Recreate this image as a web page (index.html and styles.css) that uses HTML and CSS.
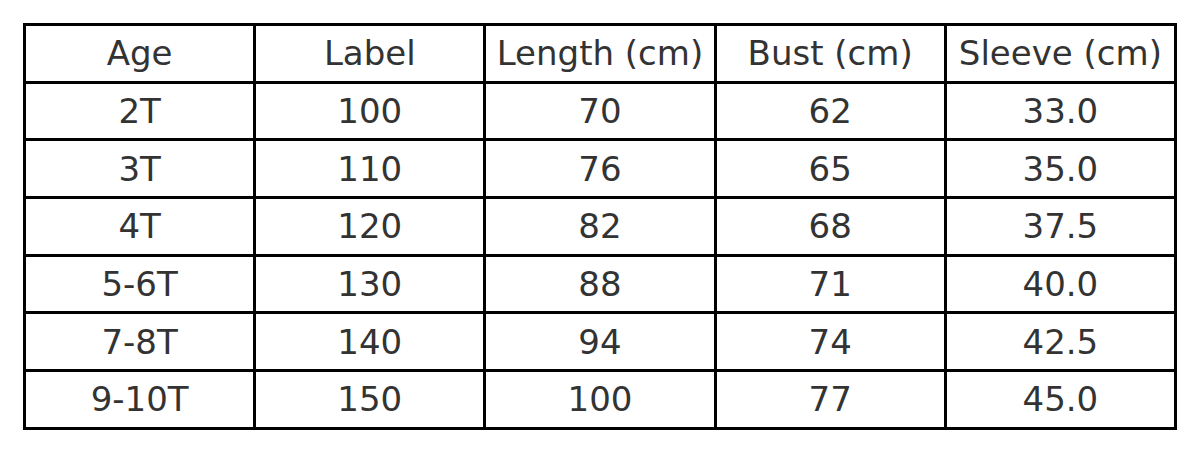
FILE: index.html
```html
<!DOCTYPE html>
<html>
<head>
<meta charset="utf-8">
<link rel="stylesheet" href="styles.css">
</head>
<body>
<table class="size-table">
  <thead>
    <tr><th>Age</th><th>Label</th><th>Length (cm)</th><th>Bust (cm)</th><th>Sleeve (cm)</th></tr>
  </thead>
  <tbody>
    <tr><td>2T</td><td>100</td><td>70</td><td>62</td><td>33.0</td></tr>
    <tr><td>3T</td><td>110</td><td>76</td><td>65</td><td>35.0</td></tr>
    <tr><td>4T</td><td>120</td><td>82</td><td>68</td><td>37.5</td></tr>
    <tr><td>5-6T</td><td>130</td><td>88</td><td>71</td><td>40.0</td></tr>
    <tr><td>7-8T</td><td>140</td><td>94</td><td>74</td><td>42.5</td></tr>
    <tr><td>9-10T</td><td>150</td><td>100</td><td>77</td><td>45.0</td></tr>
  </tbody>
</table>
</body>
</html>
```
FILE: styles.css
```css
html, body {
  margin: 0;
  padding: 0;
  background: #ffffff;
}
body {
  padding: 23px 0 0 23px;
  font-family: "DejaVu Sans", sans-serif;
}
.size-table {
  border-collapse: collapse;
  width: 1154px;
  table-layout: fixed;
}
.size-table th,
.size-table td {
  border: 3px solid #000;
  height: 54.7px;
  padding: 0;
  text-align: center;
  vertical-align: middle;
  font-size: 34px;
  font-weight: normal;
  color: #333333;
  line-height: 1;
}
```
